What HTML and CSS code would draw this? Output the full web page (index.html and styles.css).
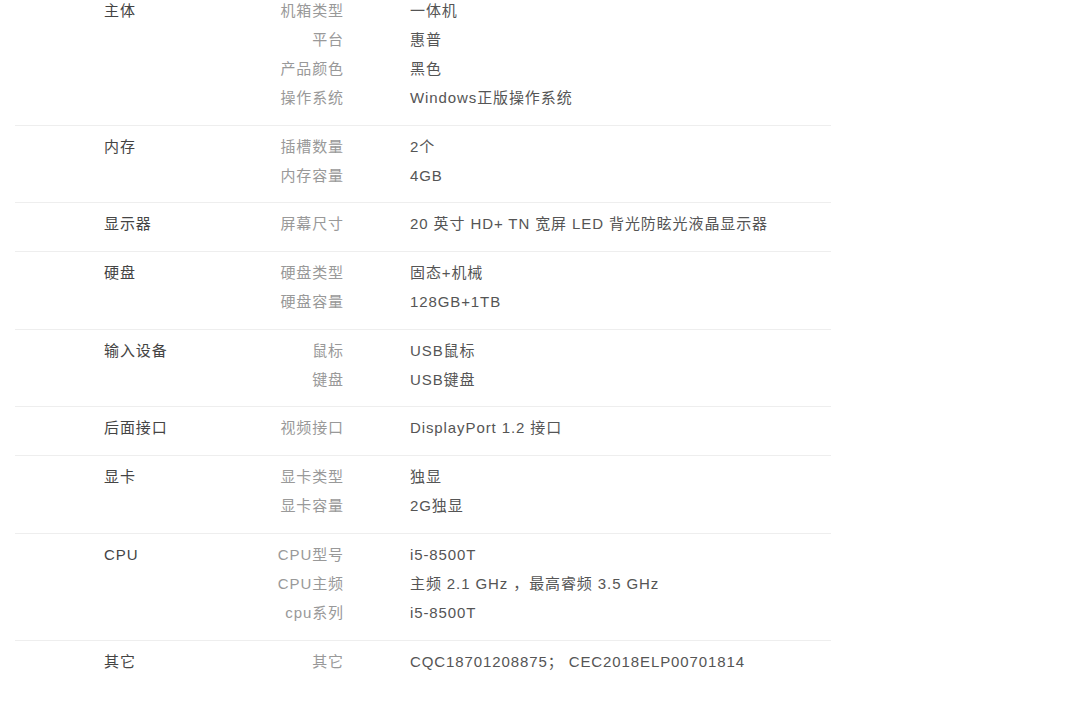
FILE: index.html
```html
<!DOCTYPE html>
<html lang="zh-CN">
<head>
    <meta charset="UTF-8">
    <title>规格参数</title>
    <link rel="stylesheet" href="styles.css">
</head>
<body>
    <div class="specs">
        <div class="group">
            <div class="group-name">主体</div>
            <div class="items">
                <div class="item"><span class="key">机箱类型</span><span class="val">一体机</span></div>
                <div class="item"><span class="key">平台</span><span class="val">惠普</span></div>
                <div class="item"><span class="key">产品颜色</span><span class="val">黑色</span></div>
                <div class="item"><span class="key">操作系统</span><span class="val">Windows正版操作系统</span></div>
            </div>
        </div>
        <div class="group">
            <div class="group-name">内存</div>
            <div class="items">
                <div class="item"><span class="key">插槽数量</span><span class="val">2个</span></div>
                <div class="item"><span class="key">内存容量</span><span class="val">4GB</span></div>
            </div>
        </div>
        <div class="group">
            <div class="group-name">显示器</div>
            <div class="items">
                <div class="item"><span class="key">屏幕尺寸</span><span class="val">20 英寸 HD+ TN 宽屏 LED 背光防眩光液晶显示器</span></div>
            </div>
        </div>
        <div class="group">
            <div class="group-name">硬盘</div>
            <div class="items">
                <div class="item"><span class="key">硬盘类型</span><span class="val">固态+机械</span></div>
                <div class="item"><span class="key">硬盘容量</span><span class="val">128GB+1TB</span></div>
            </div>
        </div>
        <div class="group">
            <div class="group-name">输入设备</div>
            <div class="items">
                <div class="item"><span class="key">鼠标</span><span class="val">USB鼠标</span></div>
                <div class="item"><span class="key">键盘</span><span class="val">USB键盘</span></div>
            </div>
        </div>
        <div class="group">
            <div class="group-name">后面接口</div>
            <div class="items">
                <div class="item"><span class="key">视频接口</span><span class="val">DisplayPort 1.2 接口</span></div>
            </div>
        </div>
        <div class="group">
            <div class="group-name">显卡</div>
            <div class="items">
                <div class="item"><span class="key">显卡类型</span><span class="val">独显</span></div>
                <div class="item"><span class="key">显卡容量</span><span class="val">2G独显</span></div>
            </div>
        </div>
        <div class="group">
            <div class="group-name">CPU</div>
            <div class="items">
                <div class="item"><span class="key">CPU型号</span><span class="val">i5-8500T</span></div>
                <div class="item"><span class="key">CPU主频</span><span class="val">主频 2.1 GHz ，最高睿频 3.5 GHz</span></div>
                <div class="item"><span class="key">cpu系列</span><span class="val">i5-8500T</span></div>
            </div>
        </div>
        <div class="group">
            <div class="group-name">其它</div>
            <div class="items">
                <div class="item"><span class="key">其它</span><span class="val">CQC18701208875； CEC2018ELP00701814</span></div>
            </div>
        </div>
    </div>
</body>
</html>
```

FILE: styles.css
```css
body {
    margin: 0;
    background: #fff;
    font-family: "Liberation Sans", "Noto Sans CJK SC", sans-serif;
    font-size: 15px;
    letter-spacing: 0.9px;
    color: #555;
}
.specs {
    width: 816px;
    margin: -11px 0 0 15px;
}
.group {
    display: flex;
    border-top: 1px solid #eee;
    padding: 6px 0 12.7px;
}
.group-name {
    width: 89px;
    padding-left: 89px;
    line-height: 29px;
    color: #444;
}
.items {
    flex: 1;
}
.item {
    display: flex;
    line-height: 29px;
}
.key {
    width: 151px;
    text-align: right;
    color: #999;
}
.val {
    margin-left: 66px;
    color: #555;
}
```
